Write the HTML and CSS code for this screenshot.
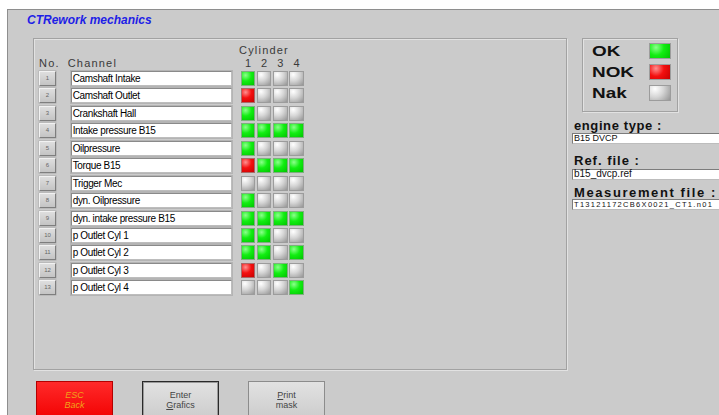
FILE: index.html
```html
<!DOCTYPE html>
<html lang="en">
<head>
<meta charset="utf-8">
<title>CTRework mechanics</title>
<link rel="stylesheet" href="styles.css">
</head>
<body>
<div class="screen">
  <div class="title">CTRework mechanics</div>

  <div class="main">
    <section class="panel">
      <div class="head-top"><span class="cyl-title">Cylinder</span></div>
      <div class="head-cols">
        <span class="h-no">No.</span>
        <span class="h-chan">Channel</span>
        <span class="h-nums"><span>1</span><span>2</span><span>3</span><span>4</span></span>
      </div>

      <div class="rows">
        <div class="row"><span class="num">1</span><span class="chan">Camshaft Intake</span><span class="cells"><i class="c ok"></i><i class="c nak"></i><i class="c nak"></i><i class="c nak"></i></span></div>
        <div class="row"><span class="num">2</span><span class="chan">Camshaft Outlet</span><span class="cells"><i class="c nok"></i><i class="c nak"></i><i class="c nak"></i><i class="c nak"></i></span></div>
        <div class="row"><span class="num">3</span><span class="chan">Crankshaft Hall</span><span class="cells"><i class="c ok"></i><i class="c nak"></i><i class="c nak"></i><i class="c nak"></i></span></div>
        <div class="row"><span class="num">4</span><span class="chan">Intake pressure B15</span><span class="cells"><i class="c ok"></i><i class="c ok"></i><i class="c ok"></i><i class="c ok"></i></span></div>
        <div class="row"><span class="num">5</span><span class="chan">Oilpressure</span><span class="cells"><i class="c ok"></i><i class="c nak"></i><i class="c nak"></i><i class="c nak"></i></span></div>
        <div class="row"><span class="num">6</span><span class="chan">Torque B15</span><span class="cells"><i class="c nok"></i><i class="c ok"></i><i class="c ok"></i><i class="c ok"></i></span></div>
        <div class="row"><span class="num">7</span><span class="chan">Trigger Mec</span><span class="cells"><i class="c nak"></i><i class="c nak"></i><i class="c nak"></i><i class="c nak"></i></span></div>
        <div class="row"><span class="num">8</span><span class="chan">dyn. Oilpressure</span><span class="cells"><i class="c ok"></i><i class="c nak"></i><i class="c nak"></i><i class="c nak"></i></span></div>
        <div class="row"><span class="num">9</span><span class="chan">dyn. intake pressure B15</span><span class="cells"><i class="c ok"></i><i class="c ok"></i><i class="c ok"></i><i class="c ok"></i></span></div>
        <div class="row"><span class="num">10</span><span class="chan">p Outlet Cyl 1</span><span class="cells"><i class="c ok"></i><i class="c ok"></i><i class="c nak"></i><i class="c nak"></i></span></div>
        <div class="row"><span class="num">11</span><span class="chan">p Outlet Cyl 2</span><span class="cells"><i class="c ok"></i><i class="c ok"></i><i class="c nak"></i><i class="c ok"></i></span></div>
        <div class="row"><span class="num">12</span><span class="chan">p Outlet Cyl 3</span><span class="cells"><i class="c nok"></i><i class="c nak"></i><i class="c ok"></i><i class="c nak"></i></span></div>
        <div class="row"><span class="num">13</span><span class="chan">p Outlet Cyl 4</span><span class="cells"><i class="c nak"></i><i class="c nak"></i><i class="c nak"></i><i class="c ok"></i></span></div>
      </div>
    </section>

    <aside class="side">
      <div class="legend">
        <div class="legend-row"><span class="legend-text">OK</span><i class="swatch ok"></i></div>
        <div class="legend-row"><span class="legend-text">NOK</span><i class="swatch nok"></i></div>
        <div class="legend-row"><span class="legend-text">Nak</span><i class="swatch nak"></i></div>
      </div>

      <div class="label label-engine">engine type :</div>
      <div class="field field-engine">B15 DVCP</div>

      <div class="label label-ref">Ref. file :</div>
      <div class="field field-ref">b15_dvcp.ref</div>

      <div class="label label-meas">Measurement file :</div>
      <div class="field field-meas">T13121172CB6X0021_CT1.n01</div>
    </aside>
  </div>

  <div class="buttons">
    <div class="btn btn-esc"><span>ESC</span><span>Back</span></div>
    <div class="btn btn-focus"><span>Enter</span><span><u>G</u>rafics</span></div>
    <div class="btn"><span><u>P</u>rint</span><span>mask</span></div>
  </div>
</div>
</body>
</html>
```

FILE: styles.css
```css
* { box-sizing: border-box; }

html, body {
  margin: 0;
  padding: 0;
  background: #ffffff;
  width: 719px;
  height: 415px;
  overflow: hidden;
  font-family: "Liberation Sans", Arial, sans-serif;
}

/* application window area */
.screen {
  margin: 9px 0 0 7px;
  height: 406px;
  border-top: 1px solid #8e8e8e;
  border-left: 1px solid #8e8e8e;
  background: #cbcbcb;
  overflow: hidden;
}

.title {
  margin: 3px 0 0 19px;
  height: 14px;
  font: italic bold 12px/14px "Liberation Sans", Arial, sans-serif;
  color: #1e1ee6;
}

.main {
  display: flex;
  margin-top: 11px;
  padding-left: 25px;
}

/* channel table panel */
.panel {
  flex: none;
  width: 534px;
  height: 332px;
  border: 1px solid #a2a2a2;
  box-shadow: inset 1px 1px 0 #e2e2e2, 1px 1px 0 #e2e2e2;
  padding: 5px 0 0 5px;
  color: #3a3a3a;
}

.head-top,
.head-cols {
  height: 13px;
  font-size: 11px;
  line-height: 13px;
  letter-spacing: 1.2px;
  white-space: nowrap;
}

.cyl-title { margin-left: 200px; }

.head-cols { display: flex; }
.h-no { width: 28.7px; }
.h-chan { width: 173px; }
.h-nums { display: flex; gap: 1.7px; letter-spacing: 0; }
.h-nums span { width: 14.5px; text-align: center; }

.rows {
  margin-top: 1px;
  display: flex;
  flex-direction: column;
  gap: 2.45px;
}

.row {
  display: flex;
  height: 15px;
}

.num {
  flex: none;
  width: 17px;
  height: 15px;
  margin-right: 14.7px;
  border: 1px solid;
  border-color: #f2f2f2 #7e7e7e #7e7e7e #f2f2f2;
  background: linear-gradient(#dedede, #c4c4c4);
  box-shadow: 0 0 0 0.5px #a8a8a8;
  color: #666;
  font-size: 6px;
  line-height: 13px;
  text-align: center;
}

.chan {
  flex: none;
  width: 161px;
  height: 15px;
  margin-right: 9px;
  background: #fff;
  border: 1px solid;
  border-color: #8a8a8a #bdbdbd #bdbdbd #8a8a8a;
  box-shadow: 0 0 0 1px #b4b4b4;
  color: #000;
  font-size: 10px;
  line-height: 13px;
  letter-spacing: -0.35px;
  padding-left: 1px;
  white-space: nowrap;
  overflow: hidden;
}

.cells {
  display: flex;
  gap: 1.7px;
}

.c {
  display: block;
  width: 14.5px;
  height: 15px;
  border: 1px solid #9c9c9c;
}

.ok  { background: radial-gradient(circle at 30% 25%, #8cff8c 0, #12ee12 45%, #00c400 100%); border-color: #7fae7f; }
.nok { background: radial-gradient(circle at 30% 25%, #ff9090 0, #f41010 45%, #c80000 100%); border-color: #a86a6a; }
.nak { background: radial-gradient(circle at 25% 20%, #ffffff 0, #d6d6d6 45%, #959595 100%); }

/* right column */
.side {
  flex: none;
  margin-left: 5px;
  width: 160px;
}

.legend {
  width: 96px;
  height: 74px;
  margin-left: 10px;
  border: 1px solid #a2a2a2;
  box-shadow: inset 1px 1px 0 #e2e2e2, 1px 1px 0 #e2e2e2;
  padding: 3.7px 6px 0 9px;
  display: flex;
  flex-direction: column;
  gap: 5.2px;
}

.legend-row {
  height: 16px;
  display: flex;
  align-items: center;
  justify-content: space-between;
}

.legend-text {
  display: inline-block;
  font-weight: bold;
  font-size: 14px;
  line-height: 16px;
  color: #111;
  transform: scaleX(1.35);
  transform-origin: left center;
}

.swatch {
  display: block;
  width: 22px;
  height: 16px;
  border: 1px solid #9c9c9c;
}

.label {
  margin-left: 2px;
  font-weight: bold;
  font-size: 13px;
  line-height: 12px;
  letter-spacing: 1.1px;
  color: #111;
  white-space: nowrap;
}

.label-engine { margin-top: 7.5px; letter-spacing: 0.6px; }
.label-ref { margin-top: 10.5px; letter-spacing: 1px; }
.label-meas { margin-top: 7.2px; letter-spacing: 1.6px; }

.field {
  height: 11px;
  width: 160px;
  background: #fff;
  border: 1px solid;
  border-color: #7c7c7c #bdbdbd #bdbdbd #7c7c7c;
  color: #111;
  font-size: 9px;
  line-height: 9px;
  padding-left: 1px;
  white-space: nowrap;
}

.field-engine { margin-top: 1.8px; }
.field-ref { margin-top: 2.5px; font-size: 10px; line-height: 8px; }
.field-meas { margin-top: 0; font-size: 7.5px; letter-spacing: 1.3px; }

/* bottom button bar */
.buttons {
  display: flex;
  gap: 29px;
  margin-top: 11px;
  padding-left: 28px;
}

.btn {
  width: 77px;
  height: 40px;
  border: 1px solid #8c8c8c;
  background: linear-gradient(#e2e2e2, #cbcbcb);
  padding-top: 8px;
  display: flex;
  flex-direction: column;
  align-items: center;
  font-size: 9px;
  line-height: 10px;
  color: #444;
}

.btn u { text-decoration: underline; }

.btn-esc {
  background: linear-gradient(#ff2a2a, #f20000);
  border-color: #b40000;
  color: #f2a21a;
  font-style: italic;
}

.btn-focus {
  border: 1px solid #2a2a2a;
  box-shadow: inset 0 0 0 1px #9a9a9a;
}
```
